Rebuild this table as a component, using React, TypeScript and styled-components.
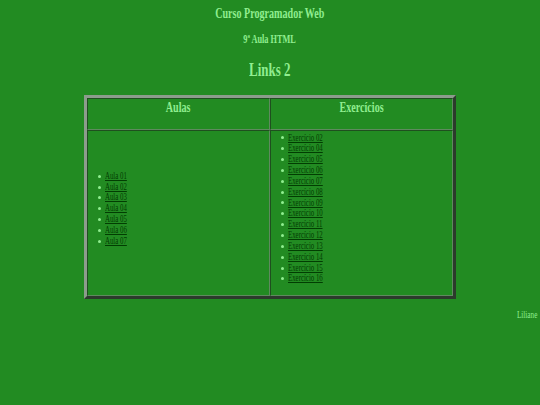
import React from "react";
import styled, { createGlobalStyle } from "styled-components";

const SQUEEZE = 0.72;

const Global = createGlobalStyle`
  html, body { margin: 0; padding: 0; }
  body {
    background: #228b22;
    color: #90ee90;
    font-family: "Liberation Serif", "Times New Roman", serif;
    width: 540px;
    height: 405px;
    overflow: hidden;
  }
`;

const Page = styled.div`
  display: flex;
  flex-direction: column;
  align-items: center;
  padding-top: 6px;
`;

const Title = styled.h1`
  margin: 0;
  font-size: 14px;
  font-weight: bold;
  line-height: 16px;
  transform: scaleX(${SQUEEZE});
`;

const Subtitle = styled.h3`
  margin: 11px 0 0;
  font-size: 11.5px;
  font-weight: bold;
  line-height: 13px;
  transform: scaleX(${SQUEEZE});
`;

const Heading = styled.h2`
  margin: 14px 0 0;
  font-size: 18px;
  font-weight: bold;
  line-height: 20px;
  transform: scaleX(${SQUEEZE});
`;

const Table = styled.table`
  margin-top: 15px;
  width: 372px;
  border-style: solid;
  border-width: 3px;
  border-color: #8c9c8c #2c3a2c #2c3a2c #8c9c8c;
  border-collapse: separate;
  border-spacing: 0;
`;

const cellBorder = `
  border-style: solid;
  border-width: 1px;
  border-color: #1f4f1f #5f8a5f #5f8a5f #1f4f1f;
  box-sizing: border-box;
`;

const HeadCell = styled.th`
  ${cellBorder}
  width: 50%;
  height: 32px;
  font-size: 14px;
  line-height: 16px;
  font-weight: bold;
  vertical-align: top;
  padding: 1px 0 0;
  color: #90ee90;
`;

const BodyCell = styled.td<{ $valign: string }>`
  ${cellBorder}
  vertical-align: ${(p) => p.$valign};
  padding: 0;
  height: 166px;
`;

const Squeeze = styled.span<{ $origin?: string }>`
  display: inline-block;
  transform: scaleX(${SQUEEZE});
  transform-origin: ${(p) => p.$origin ?? "center"};
`;

const List = styled.ul`
  margin: 0;
  padding: 1.5px 0 10px;
  list-style: none;
  font-size: 9.5px;
  line-height: 10.85px;
`;

const Item = styled.li`
  display: flex;
  align-items: center;
  height: 10.85px;
  padding-left: 10px;
  &::before {
    content: "";
    width: 3px;
    height: 3px;
    border-radius: 50%;
    background: #90ee90;
    margin-right: 4px;
    flex: none;
  }
`;

const Link = styled.a`
  color: #023d02;
  text-decoration: underline;
  display: inline-block;
  white-space: nowrap;
  transform: scaleX(${SQUEEZE});
  transform-origin: left center;
`;

const Signature = styled.div`
  align-self: flex-end;
  margin: 10px 3px 0 0;
  font-size: 10px;
  line-height: 12px;
  color: #90ee90;
  transform: scaleX(${SQUEEZE});
  transform-origin: right center;
`;

const aulas = ["01", "02", "03", "04", "05", "06", "07"];
const exercicios = ["02", "04", "05", "06", "07", "08", "09", "10", "11", "12", "13", "14", "15", "16"];

export default function App() {
  return (
    <>
      <Global />
      <Page>
        <Title>Curso Programador Web</Title>
        <Subtitle>9ª Aula HTML</Subtitle>
        <Heading>Links 2</Heading>
        <Table>
          <tbody>
            <tr>
              <HeadCell>
                <Squeeze>Aulas</Squeeze>
              </HeadCell>
              <HeadCell>
                <Squeeze>Exercícios</Squeeze>
              </HeadCell>
            </tr>
            <tr>
              <BodyCell $valign="middle">
                <List>
                  {aulas.map((a) => (
                    <Item key={a}>
                      <Link href="#">Aula {a}</Link>
                    </Item>
                  ))}
                </List>
              </BodyCell>
              <BodyCell $valign="top">
                <List>
                  {exercicios.map((e) => (
                    <Item key={e}>
                      <Link href="#">Exercício {e}</Link>
                    </Item>
                  ))}
                </List>
              </BodyCell>
            </tr>
          </tbody>
        </Table>
        <Signature>Liliane</Signature>
      </Page>
    </>
  );
}
